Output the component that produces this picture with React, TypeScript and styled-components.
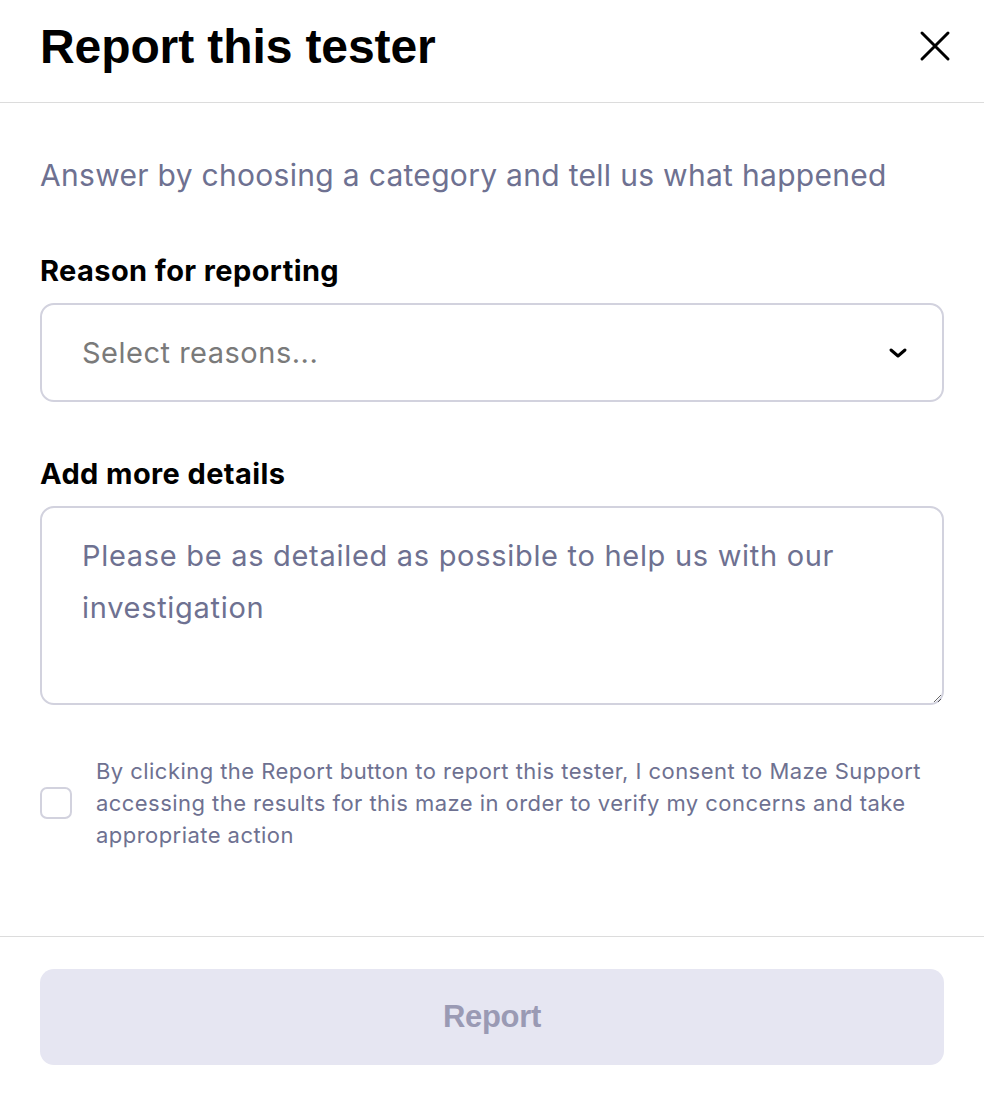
import React from "react";
import styled, { createGlobalStyle } from "styled-components";

const Global = createGlobalStyle`
  html, body { margin: 0; padding: 0; background: #fff; }
  body { font-family: Inter, "Noto Sans", sans-serif; -webkit-font-smoothing: antialiased; }
  * { box-sizing: border-box; }
`;

const Modal = styled.div`
  width: 984px;
  height: 1108px;
  display: flex;
  flex-direction: column;
  background: #fff;
`;

const Header = styled.header`
  height: 103px;
  display: flex;
  align-items: center;
  justify-content: space-between;
  padding: 0 29px 10px 40px;
  border-bottom: 1px solid #dcdcdc;
`;

const Title = styled.h1`
  margin: 0;
  font-family: "Liberation Sans", Arial, sans-serif;
  font-weight: 700;
  font-size: 48px;
  letter-spacing: -0.1px;
  color: #000;
`;

const CloseButton = styled.button`
  width: 40px;
  height: 40px;
  border: 0;
  background: none;
  padding: 0;
  display: flex;
  align-items: center;
  justify-content: center;
  cursor: pointer;
`;

const Body = styled.div`
  flex: 1;
  display: flex;
  flex-direction: column;
  padding: 52px 40px 0 40px;
`;

const Subtitle = styled.p`
  margin: 0 0 58px 0;
  font-size: 30px;
  line-height: 40px;
  color: #6e7191;
  letter-spacing: 0.3px;
`;

const Label = styled.label`
  display: block;
  font-size: 29px;
  font-weight: 700;
  line-height: 36px;
  color: #000;
  margin-bottom: 14px;
  letter-spacing: 0.4px;
`;

const SelectBox = styled.div`
  height: 99px;
  border: 2px solid #d2d2de;
  border-radius: 14px;
  display: flex;
  align-items: center;
  justify-content: space-between;
  padding: 0 34px 0 40px;
  margin-bottom: 54px;
`;

const Placeholder = styled.span`
  font-size: 29px;
  letter-spacing: 0.5px;
  color: #7a7a7a;
`;

const TextArea = styled.textarea`
  display: block;
  width: 100%;
  height: 199px;
  border: 2px solid #d2d2de;
  border-radius: 14px;
  padding: 22px 40px;
  font-family: Inter, "Noto Sans", sans-serif;
  font-size: 29px;
  letter-spacing: 0.7px;
  line-height: 52px;
  color: #000;
  resize: vertical;
  outline: none;
  &::placeholder { color: #6e7191; }
`;

const ConsentRow = styled.div`
  display: flex;
  align-items: center;
  gap: 24px;
  margin-top: 50px;
`;

const Checkbox = styled.span`
  flex: none;
  width: 32px;
  height: 32px;
  border: 2px solid #d2d2de;
  border-radius: 7px;
`;

const ConsentText = styled.p`
  margin: 0;
  font-size: 22px;
  letter-spacing: 0.45px;
  line-height: 32px;
  color: #6e7191;
`;

const Footer = styled.footer`
  border-top: 1px solid #dcdcdc;
  padding: 32px 40px 43px 40px;
`;

const ReportButton = styled.button`
  width: 100%;
  height: 96px;
  border: 0;
  border-radius: 14px;
  background: #e6e6f2;
  color: #9a9ab4;
  font-family: "Liberation Sans", Arial, sans-serif;
  font-weight: 700;
  font-size: 31px;
  letter-spacing: -0.3px;
`;

export default function App() {
  return (
    <>
      <Global />
      <Modal>
        <Header>
          <Title>Report this tester</Title>
          <CloseButton aria-label="Close">
            <svg width="32" height="32" viewBox="0 0 32 32" fill="none" stroke="#000" strokeWidth="3" strokeLinecap="round">
              <path d="M3 3 L29 29 M29 3 L3 29" />
            </svg>
          </CloseButton>
        </Header>
        <Body>
          <Subtitle>Answer by choosing a category and tell us what happened</Subtitle>
          <Label>Reason for reporting</Label>
          <SelectBox>
            <Placeholder>Select reasons...</Placeholder>
            <svg width="20" height="12" viewBox="0 0 20 12" fill="none" stroke="#000" strokeWidth="3" strokeLinecap="round" strokeLinejoin="round">
              <path d="M3 3 L10 9 L17 3" />
            </svg>
          </SelectBox>
          <Label>Add more details</Label>
          <TextArea placeholder="Please be as detailed as possible to help us with our investigation" />
          <ConsentRow>
            <Checkbox />
            <ConsentText>
              By clicking the Report button to report this tester, I consent to Maze Support accessing the results for this maze in order to verify my concerns and take appropriate action
            </ConsentText>
          </ConsentRow>
        </Body>
        <Footer>
          <ReportButton disabled>Report</ReportButton>
        </Footer>
      </Modal>
    </>
  );
}
